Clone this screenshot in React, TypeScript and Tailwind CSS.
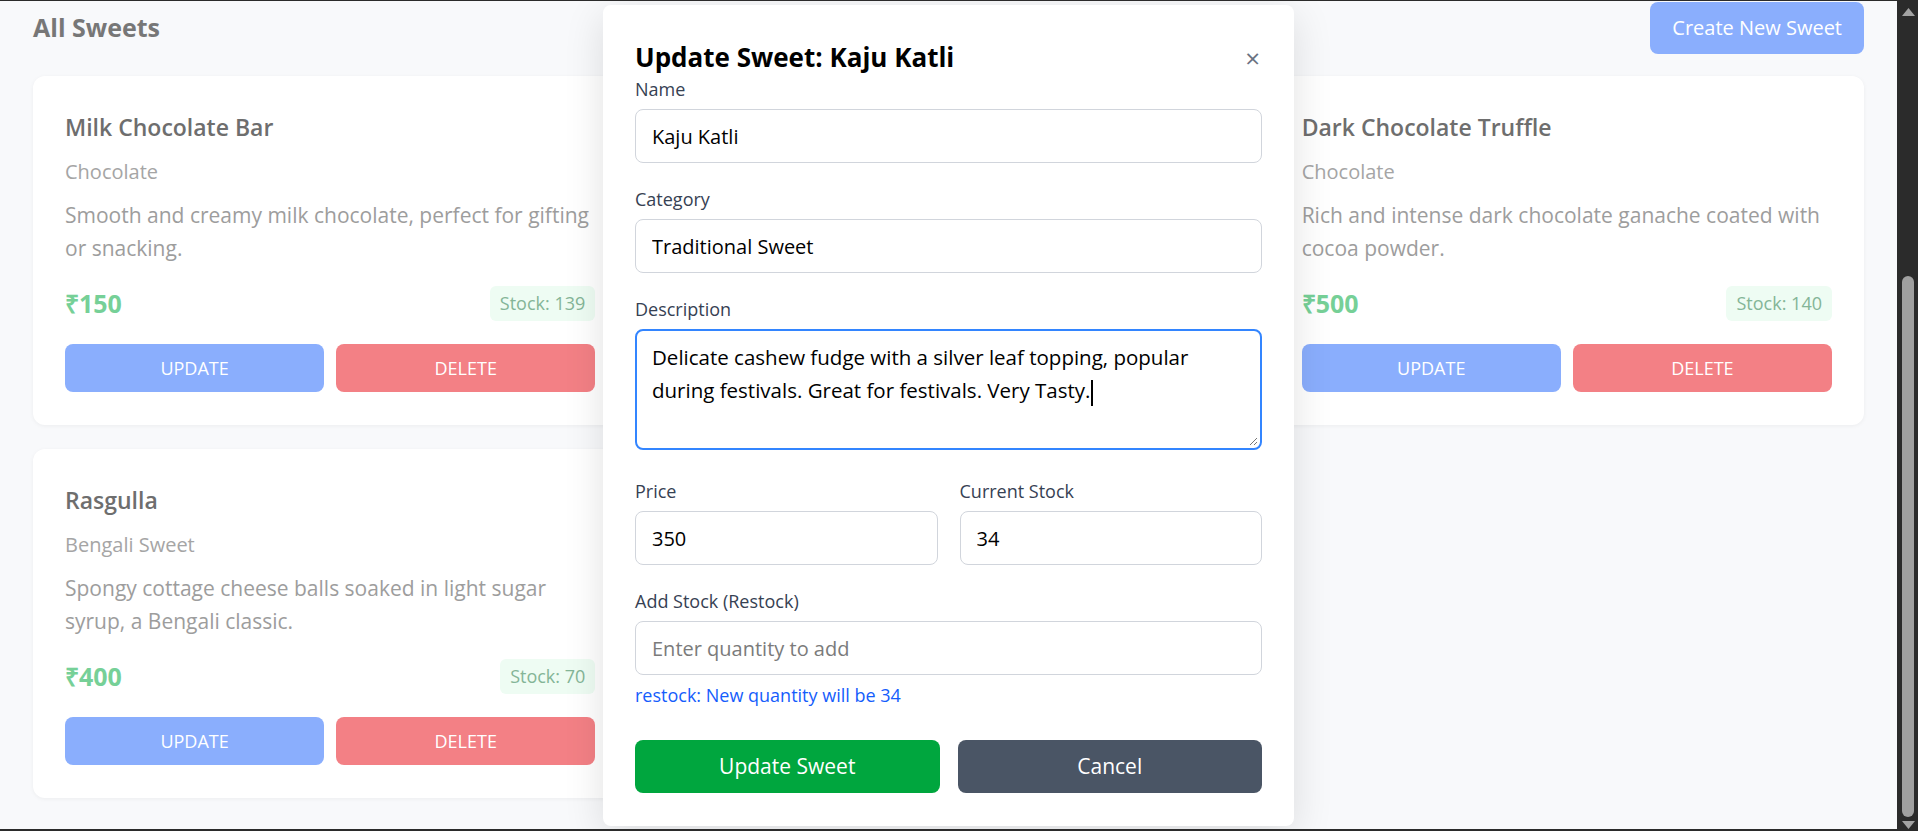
import React from "react";

type Sweet = {
  name: string;
  category: string;
  description: string;
  price: number;
  stock: number;
};

const sweets: Sweet[] = [
  {
    name: "Milk Chocolate Bar",
    category: "Chocolate",
    description: "Smooth and creamy milk chocolate, perfect for gifting or snacking.",
    price: 150,
    stock: 139,
  },
  {
    name: "Kaju Katli",
    category: "Traditional Sweet",
    description: "Delicate cashew fudge with a silver leaf topping, popular during festivals.",
    price: 350,
    stock: 34,
  },
  {
    name: "Dark Chocolate Truffle",
    category: "Chocolate",
    description: "Rich and intense dark chocolate ganache coated with cocoa powder.",
    price: 500,
    stock: 140,
  },
  {
    name: "Rasgulla",
    category: "Bengali Sweet",
    description: "Spongy cottage cheese balls soaked in light sugar syrup, a Bengali classic.",
    price: 400,
    stock: 70,
  },
];

function SweetCard({ s }: { s: Sweet }) {
  return (
    <div className="bg-white rounded-xl shadow-[0_1px_4px_rgba(0,0,0,0.05)] px-8 pt-8 pb-[33px]">
      <h3 className="text-[23px] leading-[38px] font-semibold text-[#6e6e6e]">{s.name}</h3>
      <p className="mt-[12px] text-[20px] leading-[28px] text-[#a5a5a5]">{s.category}</p>
      <p className="mt-[13px] text-[21px] leading-[33px] text-[#9d9d9d]">{s.description}</p>
      <div className="mt-[21px] flex items-center justify-between">
        <span className="text-[25px] leading-[35px] font-bold text-[#76d097]">₹{s.price}</span>
        <span className="h-[35px] flex items-center rounded-md bg-[#eefcf3] px-[10px] text-[18px] text-[#84b597]">
          Stock: {s.stock}
        </span>
      </div>
      <div className="mt-[23px] grid grid-cols-2 gap-3">
        <button className="h-12 rounded-lg bg-[#8aaefd] text-white text-[18px]">UPDATE</button>
        <button className="h-12 rounded-lg bg-[#f38085] text-white text-[18px]">DELETE</button>
      </div>
    </div>
  );
}

function Label({ children }: { children: React.ReactNode }) {
  return (
    <label className="block text-[18px] leading-6 font-medium text-[#364153] mb-2">{children}</label>
  );
}

const inputCls =
  "w-full h-[54px] border border-[#d1d5dc] rounded-lg px-4 text-[20px] text-black bg-white outline-none placeholder:text-[#7b7b7b]";

function Scrollbar() {
  return (
    <div className="w-[21px] shrink-0 bg-[#2b2b2b] flex flex-col items-center">
      <svg width="13" height="8" viewBox="0 0 13 8" className="mt-[8px] ml-[1px]">
        <path d="M6.5 0 L13 8 L0 8 Z" fill="#a3a3a3" />
      </svg>
      <div className="mt-[260px] h-[541px] w-[12px] ml-[1px] rounded-full bg-[#a0a0a0]" />
      <svg width="13" height="8" viewBox="0 0 13 8" className="mt-[4px] ml-[1px]">
        <path d="M0 0 L13 0 L6.5 8 Z" fill="#a3a3a3" />
      </svg>
    </div>
  );
}

function Modal() {
  return (
    <div className="w-[691px] mt-[4px] bg-white rounded-lg shadow-[0_10px_40px_rgba(0,0,0,0.12)] px-8 pt-8 pb-[33px]">
      <div className="h-10 flex items-center justify-between">
        <h2 className="text-[26px] font-bold text-black">Update Sweet: Kaju Katli</h2>
        <button className="text-[26px] leading-none text-[#6a7282] mr-[2px] mt-[2px]">×</button>
      </div>

      <div>
        <Label>Name</Label>
        <input className={inputCls} value="Kaju Katli" readOnly />
      </div>

      <div className="mt-6">
        <Label>Category</Label>
        <input className={inputCls} value="Traditional Sweet" readOnly />
      </div>

      <div className="mt-6">
        <Label>Description</Label>
        <div className="relative h-[121px] border-2 border-[#3385ff] rounded-lg pl-[15px] pr-[20px] pt-[10px] text-[20.5px] leading-[33px] text-black">
          Delicate cashew fudge with a silver leaf topping, popular during festivals. Great for festivals. Very Tasty.
          <span className="inline-block w-[2px] h-[26px] bg-black align-middle ml-[1px]" />
          <svg width="9" height="9" viewBox="0 0 9 9" className="absolute bottom-[2px] right-[2px]">
            <path d="M8 1 L1 8 M8 5 L5 8" stroke="#777" strokeWidth="1" />
          </svg>
        </div>
      </div>

      <div className="mt-[29px] grid grid-cols-2 gap-x-[22px]">
        <div>
          <Label>Price</Label>
          <input className={inputCls} value="350" readOnly />
        </div>
        <div>
          <Label>Current Stock</Label>
          <input className={inputCls} value="34" readOnly />
        </div>
      </div>

      <div className="mt-6">
        <Label>Add Stock (Restock)</Label>
        <input className={inputCls} placeholder="Enter quantity to add" readOnly />
        <p className="mt-[10px] text-[18px] leading-5 text-[#155dfc]">restock: New quantity will be 34</p>
      </div>

      <div className="mt-[35px] grid grid-cols-2 gap-[18px]">
        <button className="h-[53px] rounded-lg bg-[#00a63e] text-white text-[21px]">Update Sweet</button>
        <button className="h-[53px] rounded-lg bg-[#4a5565] text-white text-[21px]">Cancel</button>
      </div>
    </div>
  );
}

export default function App() {
  return (
    <div className="w-[1918px] h-[831px] overflow-hidden flex bg-[#2b2b2b] font-['Segoe_UI','Open_Sans',sans-serif]">
      <div className="relative flex-1 mt-px mb-[2px] bg-[#f8f9fb] overflow-hidden">
        <div className="px-[33px]">
          <div className="mt-px h-[52px] flex items-center justify-between">
            <h1 className="text-[25px] font-bold text-[#777777]">All Sweets</h1>
            <button className="h-[52px] px-[22px] rounded-lg bg-[#8aaefd] text-white text-[20px]">
              Create New Sweet
            </button>
          </div>
          <div className="mt-[22px] grid grid-cols-3 gap-6">
            {sweets.map((s) => (
              <SweetCard key={s.name} s={s} />
            ))}
          </div>
        </div>

        <div className="absolute inset-0 flex justify-center items-start">
          <Modal />
        </div>
      </div>
      <Scrollbar />
    </div>
  );
}
